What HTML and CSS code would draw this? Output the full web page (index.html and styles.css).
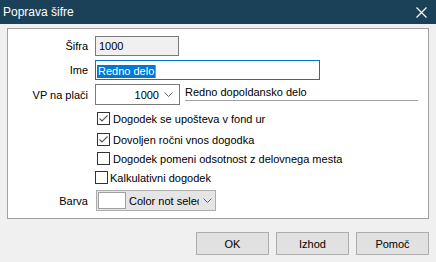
FILE: index.html
```html
<!DOCTYPE html>
<html lang="sl">
<head>
    <meta charset="UTF-8">
    <meta name="viewport" content="width=device-width, initial-scale=1.0">
    <title>Poprava šifre</title>
    <link rel="stylesheet" href="styles.css">
</head>
<body>

<div class="window">
    <div class="titlebar">
        <span class="title">Poprava šifre</span>
        <svg class="close" width="11" height="11" viewBox="0 0 11 11">
            <path d="M0.5 0.5 L10.5 10.5 M10.5 0.5 L0.5 10.5" stroke="#fff" stroke-width="1.2" fill="none"/>
        </svg>
    </div>

    <div class="panel">
        <div class="field">
            <div class="label">Šifra</div>
            <div class="input readonly">1000</div>
        </div>
        <div class="field">
            <div class="label">Ime</div>
            <div class="input wide focused"><span class="selected">Redno delo</span></div>
        </div>
        <div class="field">
            <div class="label">VP na plači</div>
            <div class="combo">
                <span class="value">1000</span>
                <svg class="chevron" width="9" height="5" viewBox="0 0 9 5">
                    <path d="M0.5 0.5 L4.5 4.5 L8.5 0.5" stroke="#606060" fill="none"/>
                </svg>
            </div>
            <div class="desc">Redno dopoldansko delo</div>
        </div>

        <div class="checks">
            <div class="check first">
                <span class="box checked">
                    <svg width="11" height="11" viewBox="0 0 11 11"><path d="M1.5 5.5 L4 8 L9.5 2.5" stroke="#555" stroke-width="1.1" fill="none"/></svg>
                </span>
                <span>Dogodek se upošteva v fond ur</span>
            </div>
            <div class="check">
                <span class="box checked">
                    <svg width="11" height="11" viewBox="0 0 11 11"><path d="M1.5 5.5 L4 8 L9.5 2.5" stroke="#555" stroke-width="1.1" fill="none"/></svg>
                </span>
                <span>Dovoljen ročni vnos dogodka</span>
            </div>
            <div class="check">
                <span class="box"></span>
                <span>Dogodek pomeni odsotnost z delovnega mesta</span>
            </div>
            <div class="check shifted">
                <span class="box"></span>
                <span>Kalkulativni dogodek</span>
            </div>
        </div>

        <div class="field color-row">
            <div class="label">Barva</div>
            <div class="colorpick">
                <span class="swatch"></span>
                <span class="colortext">Color not selected</span>
                <svg class="chevron" width="9" height="5" viewBox="0 0 9 5">
                    <path d="M0.5 0.5 L4.5 4.5 L8.5 0.5" stroke="#606060" fill="none"/>
                </svg>
            </div>
        </div>
    </div>

    <div class="buttons">
        <button>OK</button>
        <button>Izhod</button>
        <button>Pomoč</button>
    </div>
</div>

</body>
</html>
```

FILE: styles.css
```css
body {
    margin: 0;
    font-family: "Liberation Sans", Arial, sans-serif;
    font-size: 11px;
    color: #000;
    background-color: #f0f0f0;
}
.window {
    width: 436px;
    height: 262px;
    background-color: #f0f0f0;
}
.titlebar {
    display: flex;
    align-items: center;
    justify-content: space-between;
    height: 24px;
    padding: 0 9px 0 3px;
    background-color: #1b4159;
    color: #fff;
}
.title {
    font-size: 12px;
}
.panel {
    box-sizing: border-box;
    height: 191px;
    margin: 4px 7px 0;
    padding-top: 7px;
    border: 1px solid #a0a0a0;
    background-color: #fff;
}
.field {
    display: flex;
    align-items: center;
    margin-bottom: 4px;
}
.label {
    width: 80px;
    margin-right: 7px;
    text-align: right;
}
.input {
    box-sizing: border-box;
    width: 84px;
    height: 20px;
    padding-left: 3px;
    line-height: 18px;
    border: 1px solid #7a7a7a;
    background-color: #fff;
}
.input.readonly {
    background-color: #f0f0f0;
}
.input.wide {
    width: 225px;
    padding-left: 1px;
}
.input.focused {
    border-color: #0078d7;
}
.selected {
    display: inline-block;
    line-height: 13px;
    padding: 0 1px 0 1px;
    background-color: #0078d7;
    color: #fff;
    border-right: 1px solid #e8803a;
    vertical-align: middle;
}
.combo {
    box-sizing: border-box;
    display: flex;
    align-items: center;
    justify-content: flex-end;
    width: 85px;
    height: 21px;
    padding-right: 6px;
    border: 1px solid #7a7a7a;
    background-color: #fff;
}
.combo .chevron {
    margin-left: 5px;
}
.desc {
    align-self: flex-start;
    box-sizing: border-box;
    width: 233px;
    height: 16px;
    margin: 1px 0 0 5px;
    line-height: 15px;
    border-bottom: 1px solid #a0a0a0;
}
.checks {
    margin-top: 1px;
}
.check {
    display: flex;
    align-items: center;
    height: 19px;
    padding-left: 89px;
}
.check.first {
    margin-bottom: 2px;
}
.check.shifted {
    padding-left: 87px;
}
.box {
    box-sizing: border-box;
    display: flex;
    align-items: center;
    justify-content: center;
    width: 13px;
    height: 13px;
    margin-right: 3px;
    border: 1px solid #333;
    background-color: #fff;
}
.check.shifted .box {
    margin-right: 2px;
}
.color-row {
    margin-top: 3px;
}
.colorpick {
    box-sizing: border-box;
    display: flex;
    align-items: center;
    width: 120px;
    height: 21px;
    margin-left: 1px;
    padding-left: 1px;
    border: 1px solid #adadad;
    background-color: #e5e5e5;
}
.swatch {
    box-sizing: border-box;
    width: 28px;
    height: 17px;
    border: 1px solid #a0a0a0;
    background-color: #fff;
}
.colortext {
    width: 70px;
    margin-left: 3px;
    overflow: hidden;
    white-space: nowrap;
}
.colorpick .chevron {
    margin-left: 4px;
}
.buttons {
    display: flex;
    justify-content: flex-end;
    gap: 7px;
    margin-top: 13px;
    padding-right: 7px;
}
button {
    box-sizing: border-box;
    width: 73px;
    height: 23px;
    padding: 0;
    font-family: inherit;
    font-size: 11px;
    color: #000;
    border: 1px solid #adadad;
    background-color: #e1e1e1;
}
```
